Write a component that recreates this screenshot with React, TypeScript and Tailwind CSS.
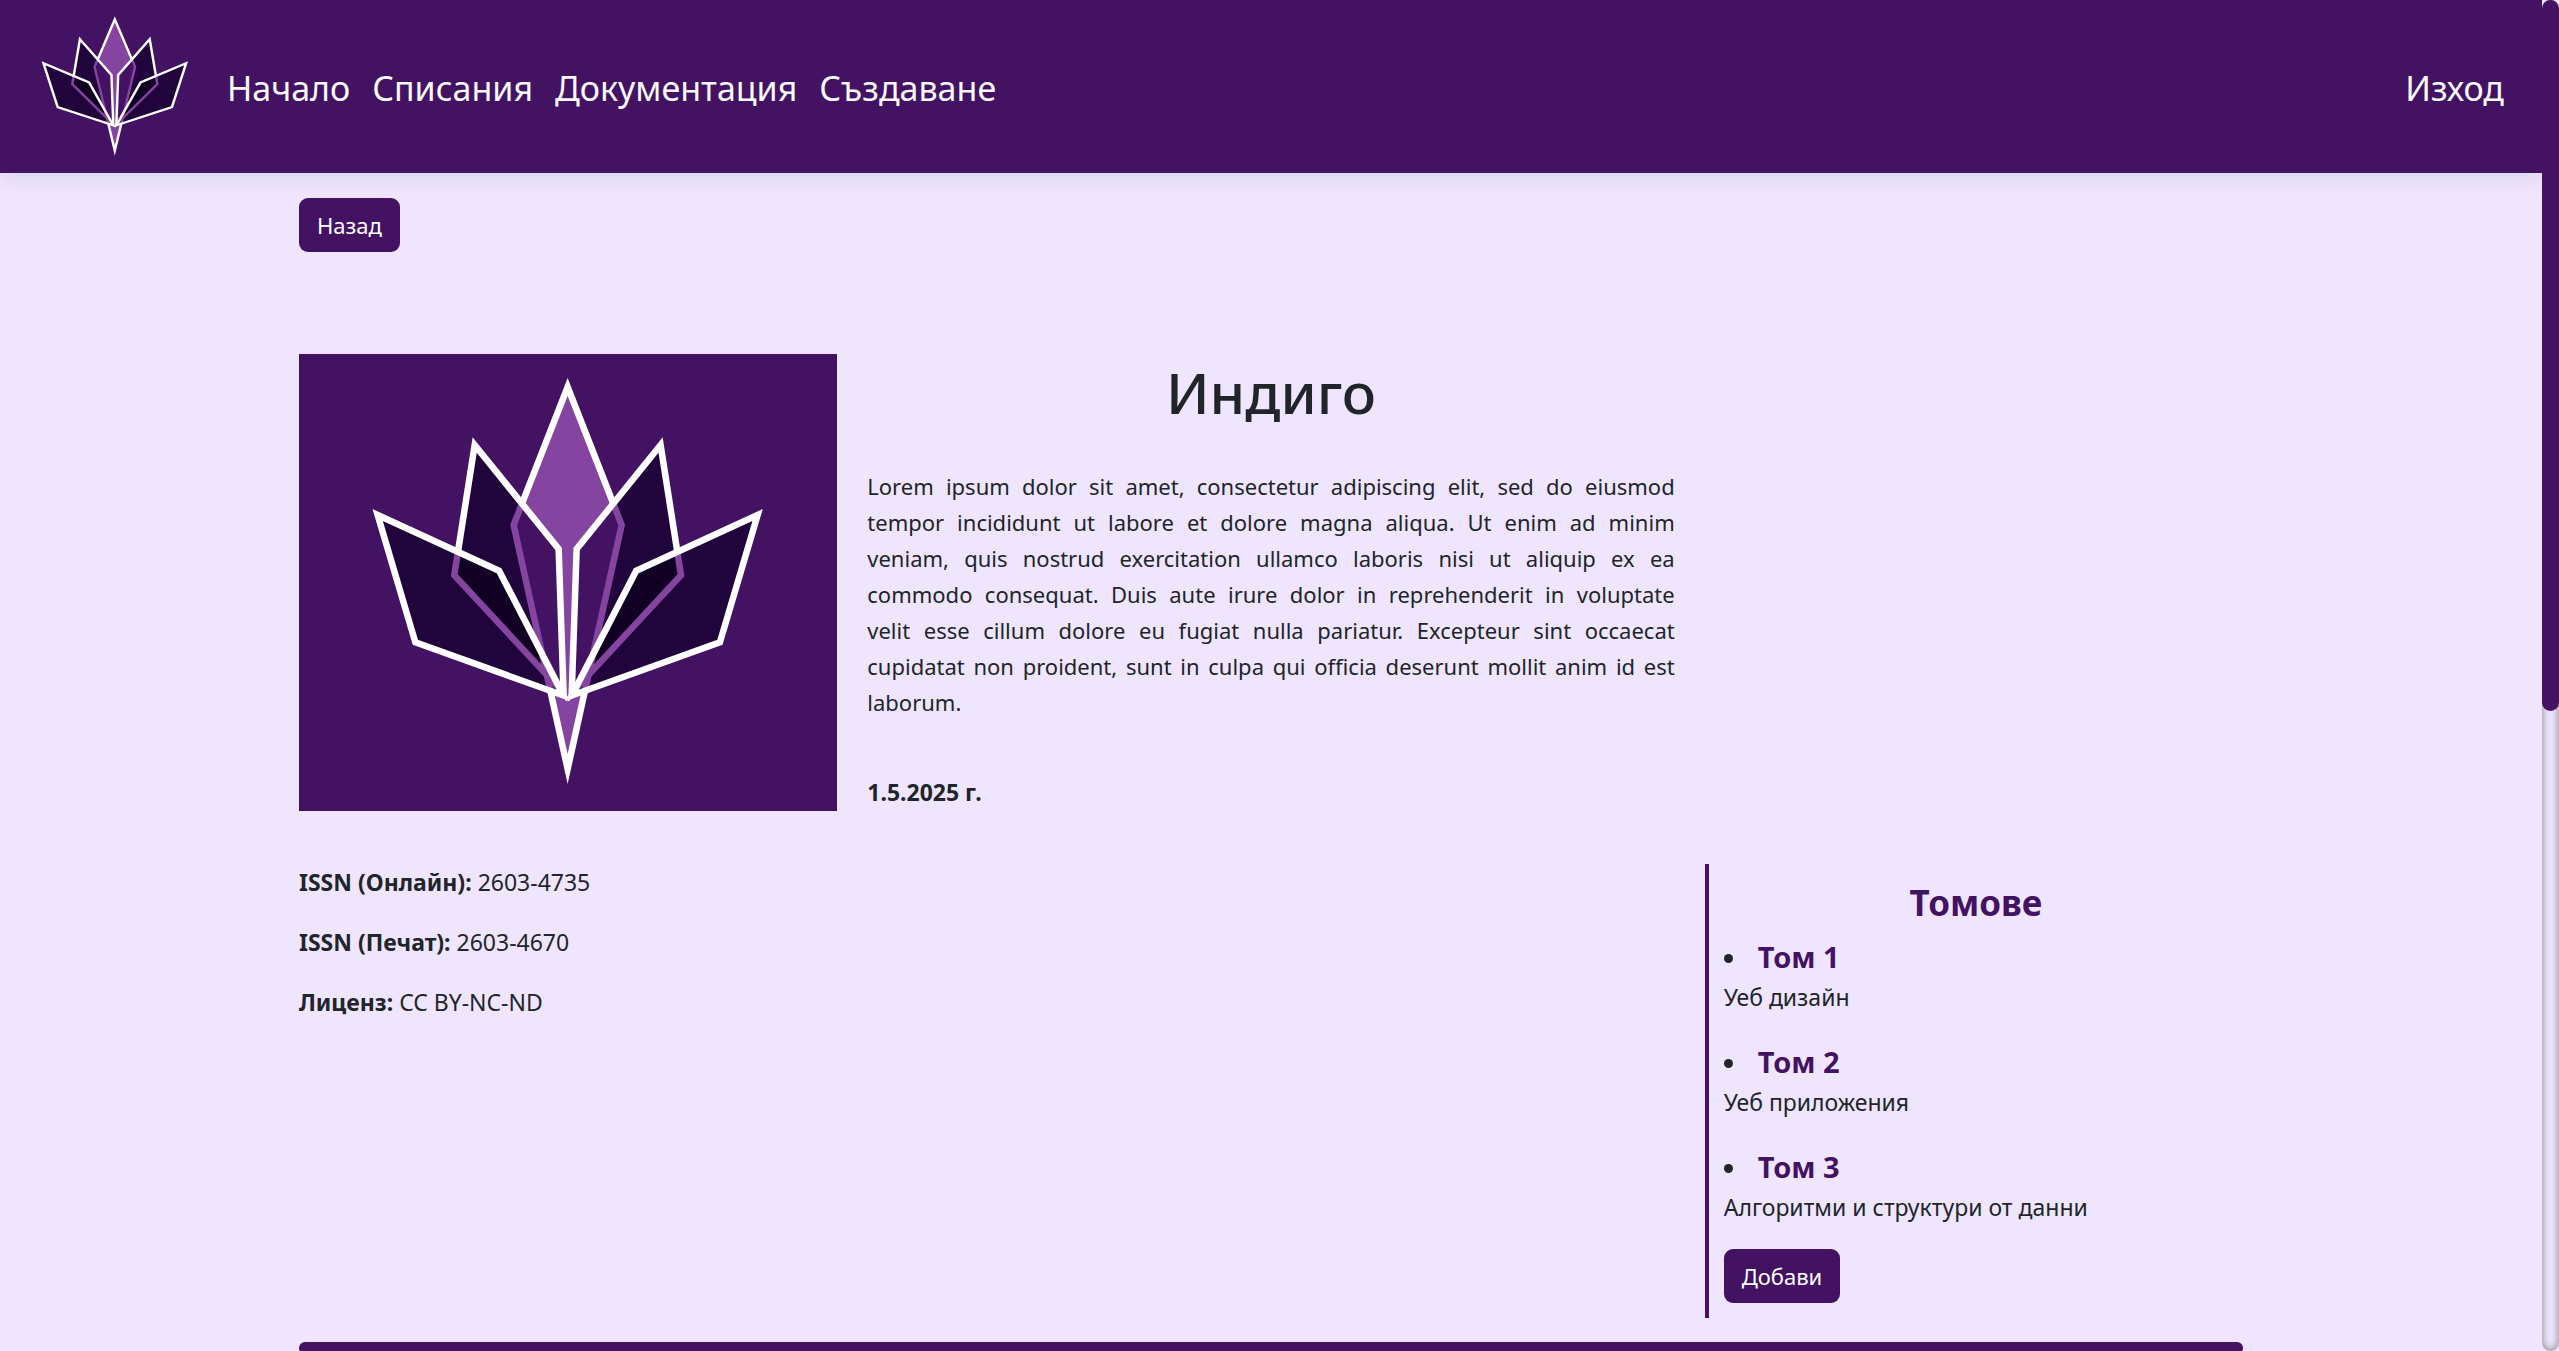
import { useId } from "react";

const TOP = "268.5,33 322.5,171 268.5,415 214.5,171";
const MID_LEFT = "175.6,91 259.5,195 264.4,339 155.2,221.3";
const MID_RIGHT = "361.4,91 277.5,195 272.6,339 381.8,221.3";
const OUTER_LEFT = "78.6,161 200,216.7 264.3,341.5 116.3,288.3";
const OUTER_RIGHT = "458.4,161 337,216.7 272.7,341.5 420.7,288.3";

function Lotus({ className }: { className: string }) {
  const id = useId();
  const mid = `${id}-mid`;
  const outer = `${id}-outer`;
  return (
    <svg
      viewBox="0 0 538 457"
      preserveAspectRatio="none"
      className={className}
      role="img"
      aria-label="Индиго"
      strokeWidth="6.5"
      strokeMiterlimit="12"
    >
      <clipPath id={mid}>
        <polygon points={MID_LEFT} />
        <polygon points={MID_RIGHT} />
      </clipPath>
      <clipPath id={outer}>
        <polygon points={OUTER_LEFT} />
        <polygon points={OUTER_RIGHT} />
      </clipPath>
      <rect width="538" height="457" fill="#431262" />
      <polygon points={TOP} fill="#8444a0" stroke="#fff" />
      <g fill="#22043c">
        <polygon points={MID_LEFT} />
        <polygon points={MID_RIGHT} />
      </g>
      <polygon points={TOP} fill="#431262" stroke="#8444a0" clipPath={`url(#${mid})`} />
      <g fill="none" stroke="#fff">
        <polygon points={MID_LEFT} />
        <polygon points={MID_RIGHT} />
      </g>
      <g fill="#22043c">
        <polygon points={OUTER_LEFT} />
        <polygon points={OUTER_RIGHT} />
      </g>
      <g clipPath={`url(#${outer})`} fill="#110023" stroke="#8444a0">
        <polygon points={MID_LEFT} />
        <polygon points={MID_RIGHT} />
        <polygon points={TOP} fill="none" />
      </g>
      <g fill="none" stroke="#fff">
        <polygon points={OUTER_LEFT} />
        <polygon points={OUTER_RIGHT} />
      </g>
    </svg>
  );
}

const links = ["Начало", "Списания", "Документация", "Създаване"];

const details = [
  ["ISSN (Онлайн):", "2603-4735"],
  ["ISSN (Печат):", "2603-4670"],
  ["Лиценз:", "CC BY-NC-ND"],
];

const volumes = [
  ["Том 1", "Уеб дизайн"],
  ["Том 2", "Уеб приложения"],
  ["Том 3", "Алгоритми и структури от данни"],
];

function Button({ children }: { children: string }) {
  return (
    <button
      type="button"
      className="block h-[54px] rounded-[9px] bg-[#431262] px-[18px] text-[22px] text-white"
    >
      {children}
    </button>
  );
}

export default function App() {
  return (
    <div className="flex h-screen overflow-hidden bg-[#efe5ff] font-['Noto_Sans','Open_Sans',sans-serif] text-[23px] leading-[36px] text-[#212529]">
      <div className="min-w-0 flex-1">
        <header className="flex items-center bg-[#431262] py-2 pr-[27px] pl-[14px] text-[34px] leading-[54px] text-[#f8f9fa] shadow-[0_6px_20px_rgba(0,0,0,0.075)]">
          <a href="#home" className="shrink-0">
            <Lotus className="h-[157px] w-[202px]" />
          </a>
          <nav className="flex flex-1 items-center pt-0.5">
            {links.map((label) => (
              <a key={label} href="#" className="px-[11px]">
                {label}
              </a>
            ))}
            <a href="#logout" className="ml-auto px-[11px]">
              Изход
            </a>
          </nav>
        </header>

        <main className="mx-auto max-w-[1980px] px-[18px] pt-[25px]">
          <Button>Назад</Button>

          <div className="mt-[102px] grid grid-cols-[2fr_3fr_2fr] gap-x-[30px]">
            <div>
              <Lotus className="h-[457px] w-full" />
            </div>
            <section className="h-[510px]">
              <h1 className="pt-0.5 text-center text-[57px] leading-[72px] font-medium">Индиго</h1>
              <p className="pt-[40px] text-justify text-[22px]">
                Lorem ipsum dolor sit amet, consectetur adipiscing elit, sed do eiusmod tempor
                incididunt ut labore et dolore magna aliqua. Ut enim ad minim veniam, quis nostrud
                exercitation ullamco laboris nisi ut aliquip ex ea commodo consequat. Duis aute irure
                dolor in reprehenderit in voluptate velit&nbsp;esse cillum dolore eu fugiat nulla
                pariatur. Excepteur sint occaecat cupidatat non proident, sunt in culpa qui officia
                deserunt mollit anim id est laborum.
              </p>
              <p className="pt-[54px] font-bold">1.5.2025 г.</p>
            </section>
            <div />

            <dl className="col-span-2 flex flex-col gap-6">
              {details.map(([name, value]) => (
                <div key={name} className="flex gap-[6px]">
                  <dt className="font-bold">{name}</dt>
                  <dd>{value}</dd>
                </div>
              ))}
            </dl>
            <aside className="border-l-4 border-[#431262] pb-[15px]">
              <h2 className="pt-[17px] text-center text-[35px] leading-[43px] font-bold text-[#431262]">
                Томове
              </h2>
              <div className="pt-[10px] pl-[15px]">
                <ul>
                  {volumes.map(([name, topic]) => (
                    <li key={name} className="pb-6">
                      <div className="flex items-center">
                        <span className="mt-1 mr-[25px] size-[9px] rounded-full bg-[#212529]" />
                        <a href="#volume" className="text-[29px] leading-[45px] font-bold text-[#431262]">
                          {name}
                        </a>
                      </div>
                      <p>{topic}</p>
                    </li>
                  ))}
                </ul>
                <Button>Добави</Button>
              </div>
            </aside>
          </div>
          <div className="mt-6 h-[12px] rounded-[6px] bg-[#431262]" />
        </main>
      </div>
      <div className="w-[17px] shrink-0 rounded-[10px] bg-[#efe5ff] shadow-[inset_0_0_8px_grey]">
        <div className="h-[711px] rounded-[10px] bg-[#431262]" />
      </div>
    </div>
  );
}
